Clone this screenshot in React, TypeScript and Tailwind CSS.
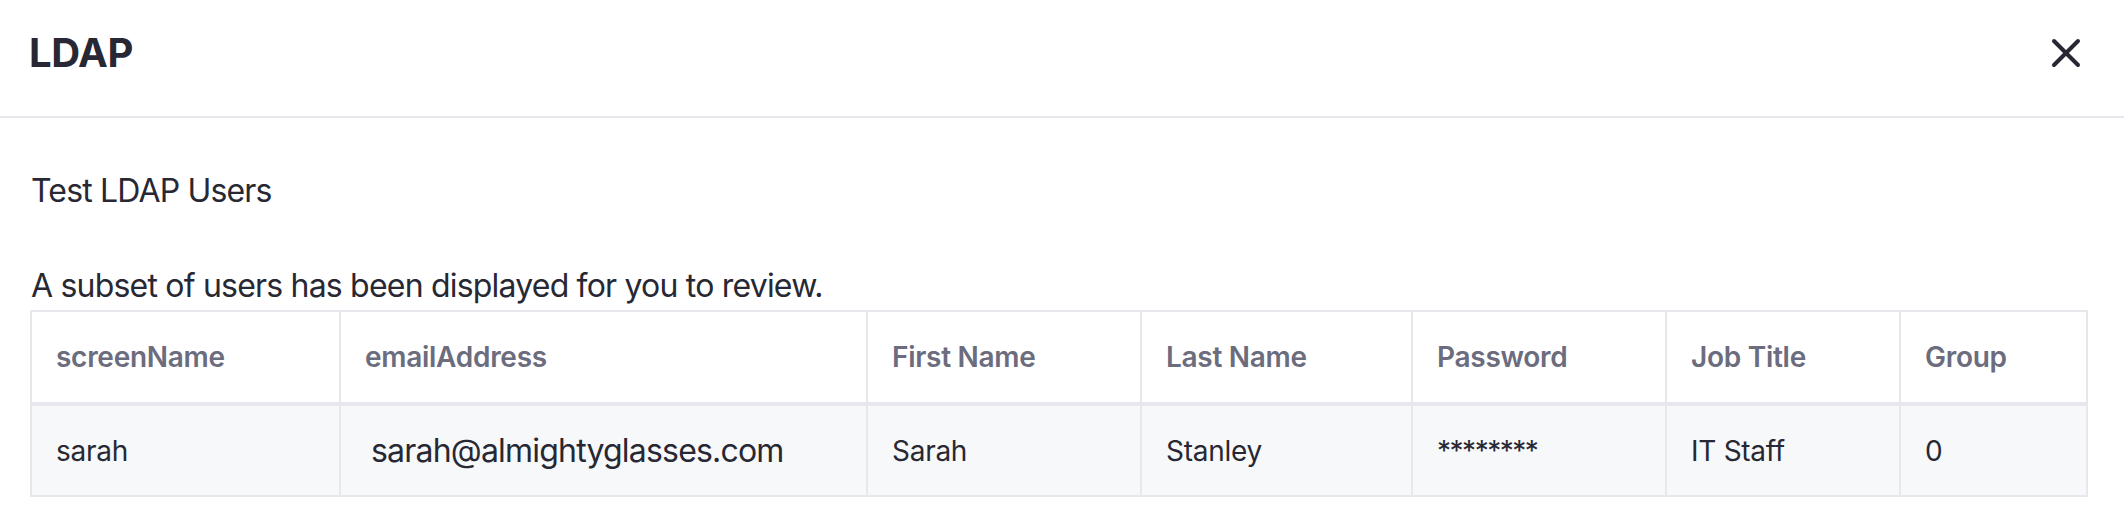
import React from "react";

const headers = ["screenName", "emailAddress", "First Name", "Last Name", "Password", "Job Title", "Group"];

export default function App() {
  return (
    <div className="w-[2124px] h-[528px] bg-white text-[#272833] overflow-hidden" style={{ fontFamily: "Inter, 'Noto Sans', sans-serif" }}>
      <div className="flex justify-between h-[118px] border-b-2 border-[#e7e7ed] pl-[29px] pr-[42px]">
        <h1 className="pt-[29px] text-[40px] leading-[48px] font-bold tracking-[-0.01em]">LDAP</h1>
        <button className="mt-[37px] w-[32px] h-[32px] text-[#272833]" aria-label="Close">
          <svg width="32" height="32" viewBox="0 0 32 32" fill="none" stroke="currentColor" strokeWidth="4" strokeLinecap="round">
            <line x1="4" y1="4" x2="28" y2="28" />
            <line x1="28" y1="4" x2="4" y2="28" />
          </svg>
        </button>
      </div>
      <div className="pt-[49px] pl-[30px] pr-[36px]">
        <p className="pl-[1px] text-[32px] leading-[48px] mb-[47px] tracking-[-0.026em]">Test LDAP Users</p>
        <p className="pl-[1px] text-[32px] leading-[48px] tracking-[-0.025em]">A subset of users has been displayed for you to review.</p>
        <div className="grid grid-cols-[309px_527px_274px_271px_254px_234px_187px] w-[2058px] border-l-2 border-t-2 border-[#e7e7ed]">
          {headers.map((h) => (
            <div key={h} className="h-[94px] flex items-center pl-[24px] border-r-2 border-b-4 border-[#e7e7ed] text-[28px] leading-[42px] font-semibold text-[#6b6c7e] tracking-[-0.01em]">
              {h}
            </div>
          ))}
          <div className="h-[91px] flex items-center pl-[24px] border-r-2 border-b-2 border-[#e7e7ed] bg-[#f7f8f9] text-[28px] leading-[42px] tracking-[-0.01em]">sarah</div>
          <div className="h-[91px] flex items-center pl-[30px] border-r-2 border-b-2 border-[#e7e7ed] bg-[#f7f8f9] text-[32px] leading-[48px] tracking-[-0.025em]">sarah@almightyglasses.com</div>
          <div className="h-[91px] flex items-center pl-[24px] border-r-2 border-b-2 border-[#e7e7ed] bg-[#f7f8f9] text-[28px] leading-[42px] tracking-[-0.01em]">Sarah</div>
          <div className="h-[91px] flex items-center pl-[24px] border-r-2 border-b-2 border-[#e7e7ed] bg-[#f7f8f9] text-[28px] leading-[42px] tracking-[-0.01em]">Stanley</div>
          <div className="h-[91px] flex items-center pl-[24px] border-r-2 border-b-2 border-[#e7e7ed] bg-[#f7f8f9] text-[28px] leading-[42px] tracking-[-0.053em]">********</div>
          <div className="h-[91px] flex items-center pl-[24px] border-r-2 border-b-2 border-[#e7e7ed] bg-[#f7f8f9] text-[28px] leading-[42px] tracking-[-0.01em]">IT Staff</div>
          <div className="h-[91px] flex items-center pl-[24px] border-r-2 border-b-2 border-[#e7e7ed] bg-[#f7f8f9] text-[28px] leading-[42px] tracking-[-0.01em]">0</div>
        </div>
      </div>
    </div>
  );
}
